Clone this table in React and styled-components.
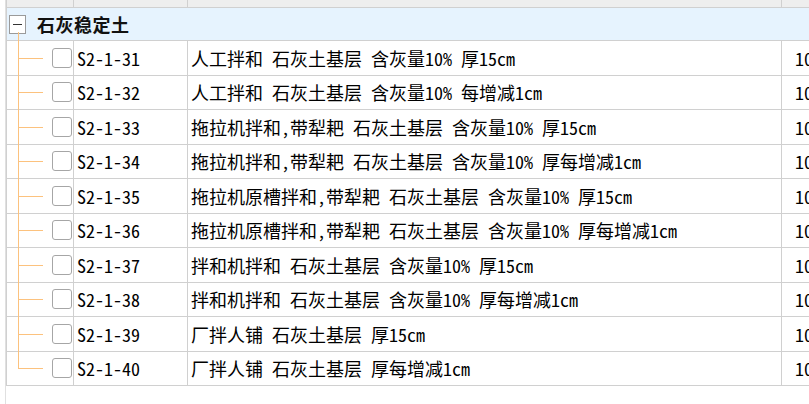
import styled, { createGlobalStyle } from 'styled-components'

const GlobalStyle = createGlobalStyle`
  html, body {
    margin: 0;
    padding: 0;
    background: #fff;
    overflow: hidden;
  }
  body {
    font-family: "Noto Sans Mono CJK SC", "Noto Sans CJK SC", sans-serif;
    color: #000;
  }
`

const COLS = '67px 114px 594px 220px'
const LINE = '#d0d0d0'
const TREE = '#fcc27e'

const Panel = styled.div`
    width: 804px;
    height: 404px;
    margin-left: 5px;
    border-left: 1px solid #e0e0e0;
    overflow: hidden;
`

const Grid = styled.div`
    width: 1000px;
    display: flex;
    flex-direction: column;
`

const TopRow = styled.div`
    display: grid;
    grid-template-columns: ${COLS};
    height: 8px;
    box-sizing: border-box;
    border-left: 1px solid ${LINE};
    border-bottom: 1px solid ${LINE};
    background: #eeeeee;
`

const TopCell = styled.div`
    border-right: 1px solid ${LINE};
`

const GroupRow = styled.div`
    position: relative;
    display: flex;
    align-items: center;
    gap: 11px;
    height: 33px;
    box-sizing: border-box;
    padding-left: 2px;
    border-left: 1px solid ${LINE};
    border-bottom: 1px solid ${LINE};
    background: #e6f3fe;
`

const Toggle = styled.span`
    width: 17px;
    height: 19px;
    box-sizing: border-box;
    border: 1px solid #9a9a9a;
    background: #fff;
    display: flex;
    align-items: center;
    justify-content: center;
    margin-top: 1px;

    &::before {
        content: '';
        width: 9px;
        height: 1px;
        background: #333;
    }
`

const Stem = styled.span`
    position: absolute;
    left: 11px;
    top: 24px;
    bottom: -1px;
    width: 1px;
    background: ${TREE};
`

const GroupTitle = styled.span`
    font-family: "Noto Sans CJK SC", sans-serif;
    font-size: 18px;
    font-weight: 700;
    letter-spacing: 0.5px;
    color: #111;
`

const Row = styled.div`
    display: grid;
    grid-template-columns: ${COLS};
    height: 34.5px;
    box-sizing: border-box;
    border-left: 1px solid ${LINE};
    border-bottom: 1px solid ${LINE};
`

const Cell = styled.div`
    display: flex;
    align-items: center;
    box-sizing: border-box;
    padding-left: ${(p) => p.$pad || 3}px;
    border-right: 1px solid ${LINE};
    font-size: 18px;
    white-space: nowrap;
    overflow: hidden;
`

const TreeCell = styled.div`
    position: relative;
    display: flex;
    align-items: center;
    padding-left: 45px;
    box-sizing: border-box;
    border-right: 1px solid ${LINE};

    &::before {
        content: '';
        position: absolute;
        left: 11px;
        top: -1px;
        bottom: ${(p) => (p.$last ? '50%' : '-1px')};
        width: 1px;
        background: ${TREE};
    }

    &::after {
        content: '';
        position: absolute;
        left: 11px;
        top: 50%;
        width: 25px;
        height: 1px;
        background: ${TREE};
    }
`

const Check = styled.span`
    width: 20px;
    height: 20px;
    box-sizing: border-box;
    border: 1.5px solid #a6a6a6;
    border-radius: 3px;
    background: #fff;
`

const rows = [
    ['S2-1-31', '人工拌和 石灰土基层 含灰量10% 厚15cm'],
    ['S2-1-32', '人工拌和 石灰土基层 含灰量10% 每增减1cm'],
    ['S2-1-33', '拖拉机拌和,带犁耙 石灰土基层 含灰量10% 厚15cm'],
    ['S2-1-34', '拖拉机拌和,带犁耙 石灰土基层 含灰量10% 厚每增减1cm'],
    ['S2-1-35', '拖拉机原槽拌和,带犁耙 石灰土基层 含灰量10% 厚15cm'],
    ['S2-1-36', '拖拉机原槽拌和,带犁耙 石灰土基层 含灰量10% 厚每增减1cm'],
    ['S2-1-37', '拌和机拌和 石灰土基层 含灰量10% 厚15cm'],
    ['S2-1-38', '拌和机拌和 石灰土基层 含灰量10% 厚每增减1cm'],
    ['S2-1-39', '厂拌人铺 石灰土基层 厚15cm'],
    ['S2-1-40', '厂拌人铺 石灰土基层 厚每增减1cm'],
]

export default function App() {
    return (
        <>
            <GlobalStyle />
            <Panel>
                <Grid>
                    <TopRow>
                        <TopCell />
                        <TopCell />
                        <TopCell />
                        <TopCell />
                    </TopRow>
                    <GroupRow>
                        <Toggle />
                        <GroupTitle>石灰稳定土</GroupTitle>
                        <Stem />
                    </GroupRow>
                    {rows.map(([code, name], i) => (
                        <Row key={code}>
                            <TreeCell $last={i === rows.length - 1}>
                                <Check />
                            </TreeCell>
                            <Cell>{code}</Cell>
                            <Cell>{name}</Cell>
                            <Cell $pad={13}>100m2</Cell>
                        </Row>
                    ))}
                </Grid>
            </Panel>
        </>
    )
}
